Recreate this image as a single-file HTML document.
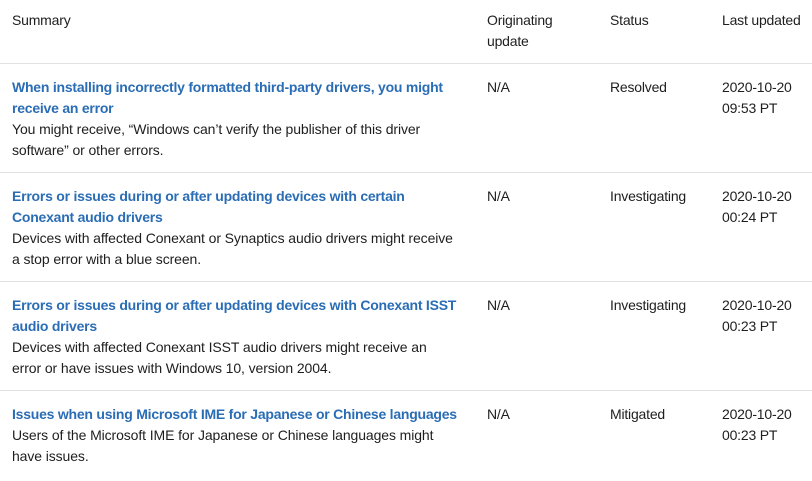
<!DOCTYPE html>
<html><head><meta charset="utf-8"><style>
body{margin:0;background:#fff;font-family:"Liberation Sans",sans-serif;font-size:14px;color:#1e1e1e;letter-spacing:-0.2px;}
.wrap{position:relative;width:812px;height:481px;overflow:hidden;}
.row{position:absolute;left:0;width:812px;border-bottom:1px solid #e1e1e1;}
.c{position:absolute;line-height:21px;white-space:nowrap;}
.t{color:#2a6db5;font-weight:bold;letter-spacing:-0.23px;}
.d{letter-spacing:-0.1px;}
</style></head><body><div class="wrap">
<div class="row" style="top:0;height:63px">
<div class="c" style="left:12px;top:10px">Summary</div>
<div class="c" style="left:487px;top:10px">Originating<br>update</div>
<div class="c" style="left:610px;top:10px">Status</div>
<div class="c" style="left:722px;top:10px">Last updated</div>
</div>
<div class="row" style="top:64px;height:108px">
<div class="c" style="left:12px;top:13px;width:450px"><span class="t">When installing incorrectly formatted third-party drivers, you might<br>receive an error</span><br><span class="d">You might receive, “Windows can’t verify the publisher of this driver<br>software” or other errors.</span></div>
<div class="c" style="left:487px;top:13px">N/A</div>
<div class="c" style="left:610px;top:13px">Resolved</div>
<div class="c" style="left:722px;top:13px">2020-10-20<br>09:53 PT</div>
</div>
<div class="row" style="top:173px;height:108px">
<div class="c" style="left:12px;top:13px;width:450px"><span class="t">Errors or issues during or after updating devices with certain<br>Conexant audio drivers</span><br><span class="d">Devices with affected Conexant or Synaptics audio drivers might receive<br>a stop error with a blue screen.</span></div>
<div class="c" style="left:487px;top:13px">N/A</div>
<div class="c" style="left:610px;top:13px">Investigating</div>
<div class="c" style="left:722px;top:13px">2020-10-20<br>00:24 PT</div>
</div>
<div class="row" style="top:282px;height:108px">
<div class="c" style="left:12px;top:13px;width:450px"><span class="t">Errors or issues during or after updating devices with Conexant ISST<br>audio drivers</span><br><span class="d">Devices with affected Conexant ISST audio drivers might receive an<br>error or have issues with Windows 10, version 2004.</span></div>
<div class="c" style="left:487px;top:13px">N/A</div>
<div class="c" style="left:610px;top:13px">Investigating</div>
<div class="c" style="left:722px;top:13px">2020-10-20<br>00:23 PT</div>
</div>
<div class="row" style="top:391px;height:90px;border-bottom:none">
<div class="c" style="left:12px;top:13px;width:450px"><span class="t">Issues when using Microsoft IME for Japanese or Chinese languages</span><br><span class="d">Users of the Microsoft IME for Japanese or Chinese languages might<br>have issues.</span></div>
<div class="c" style="left:487px;top:13px">N/A</div>
<div class="c" style="left:610px;top:13px">Mitigated</div>
<div class="c" style="left:722px;top:13px">2020-10-20<br>00:23 PT</div>
</div>
</div></body></html>
